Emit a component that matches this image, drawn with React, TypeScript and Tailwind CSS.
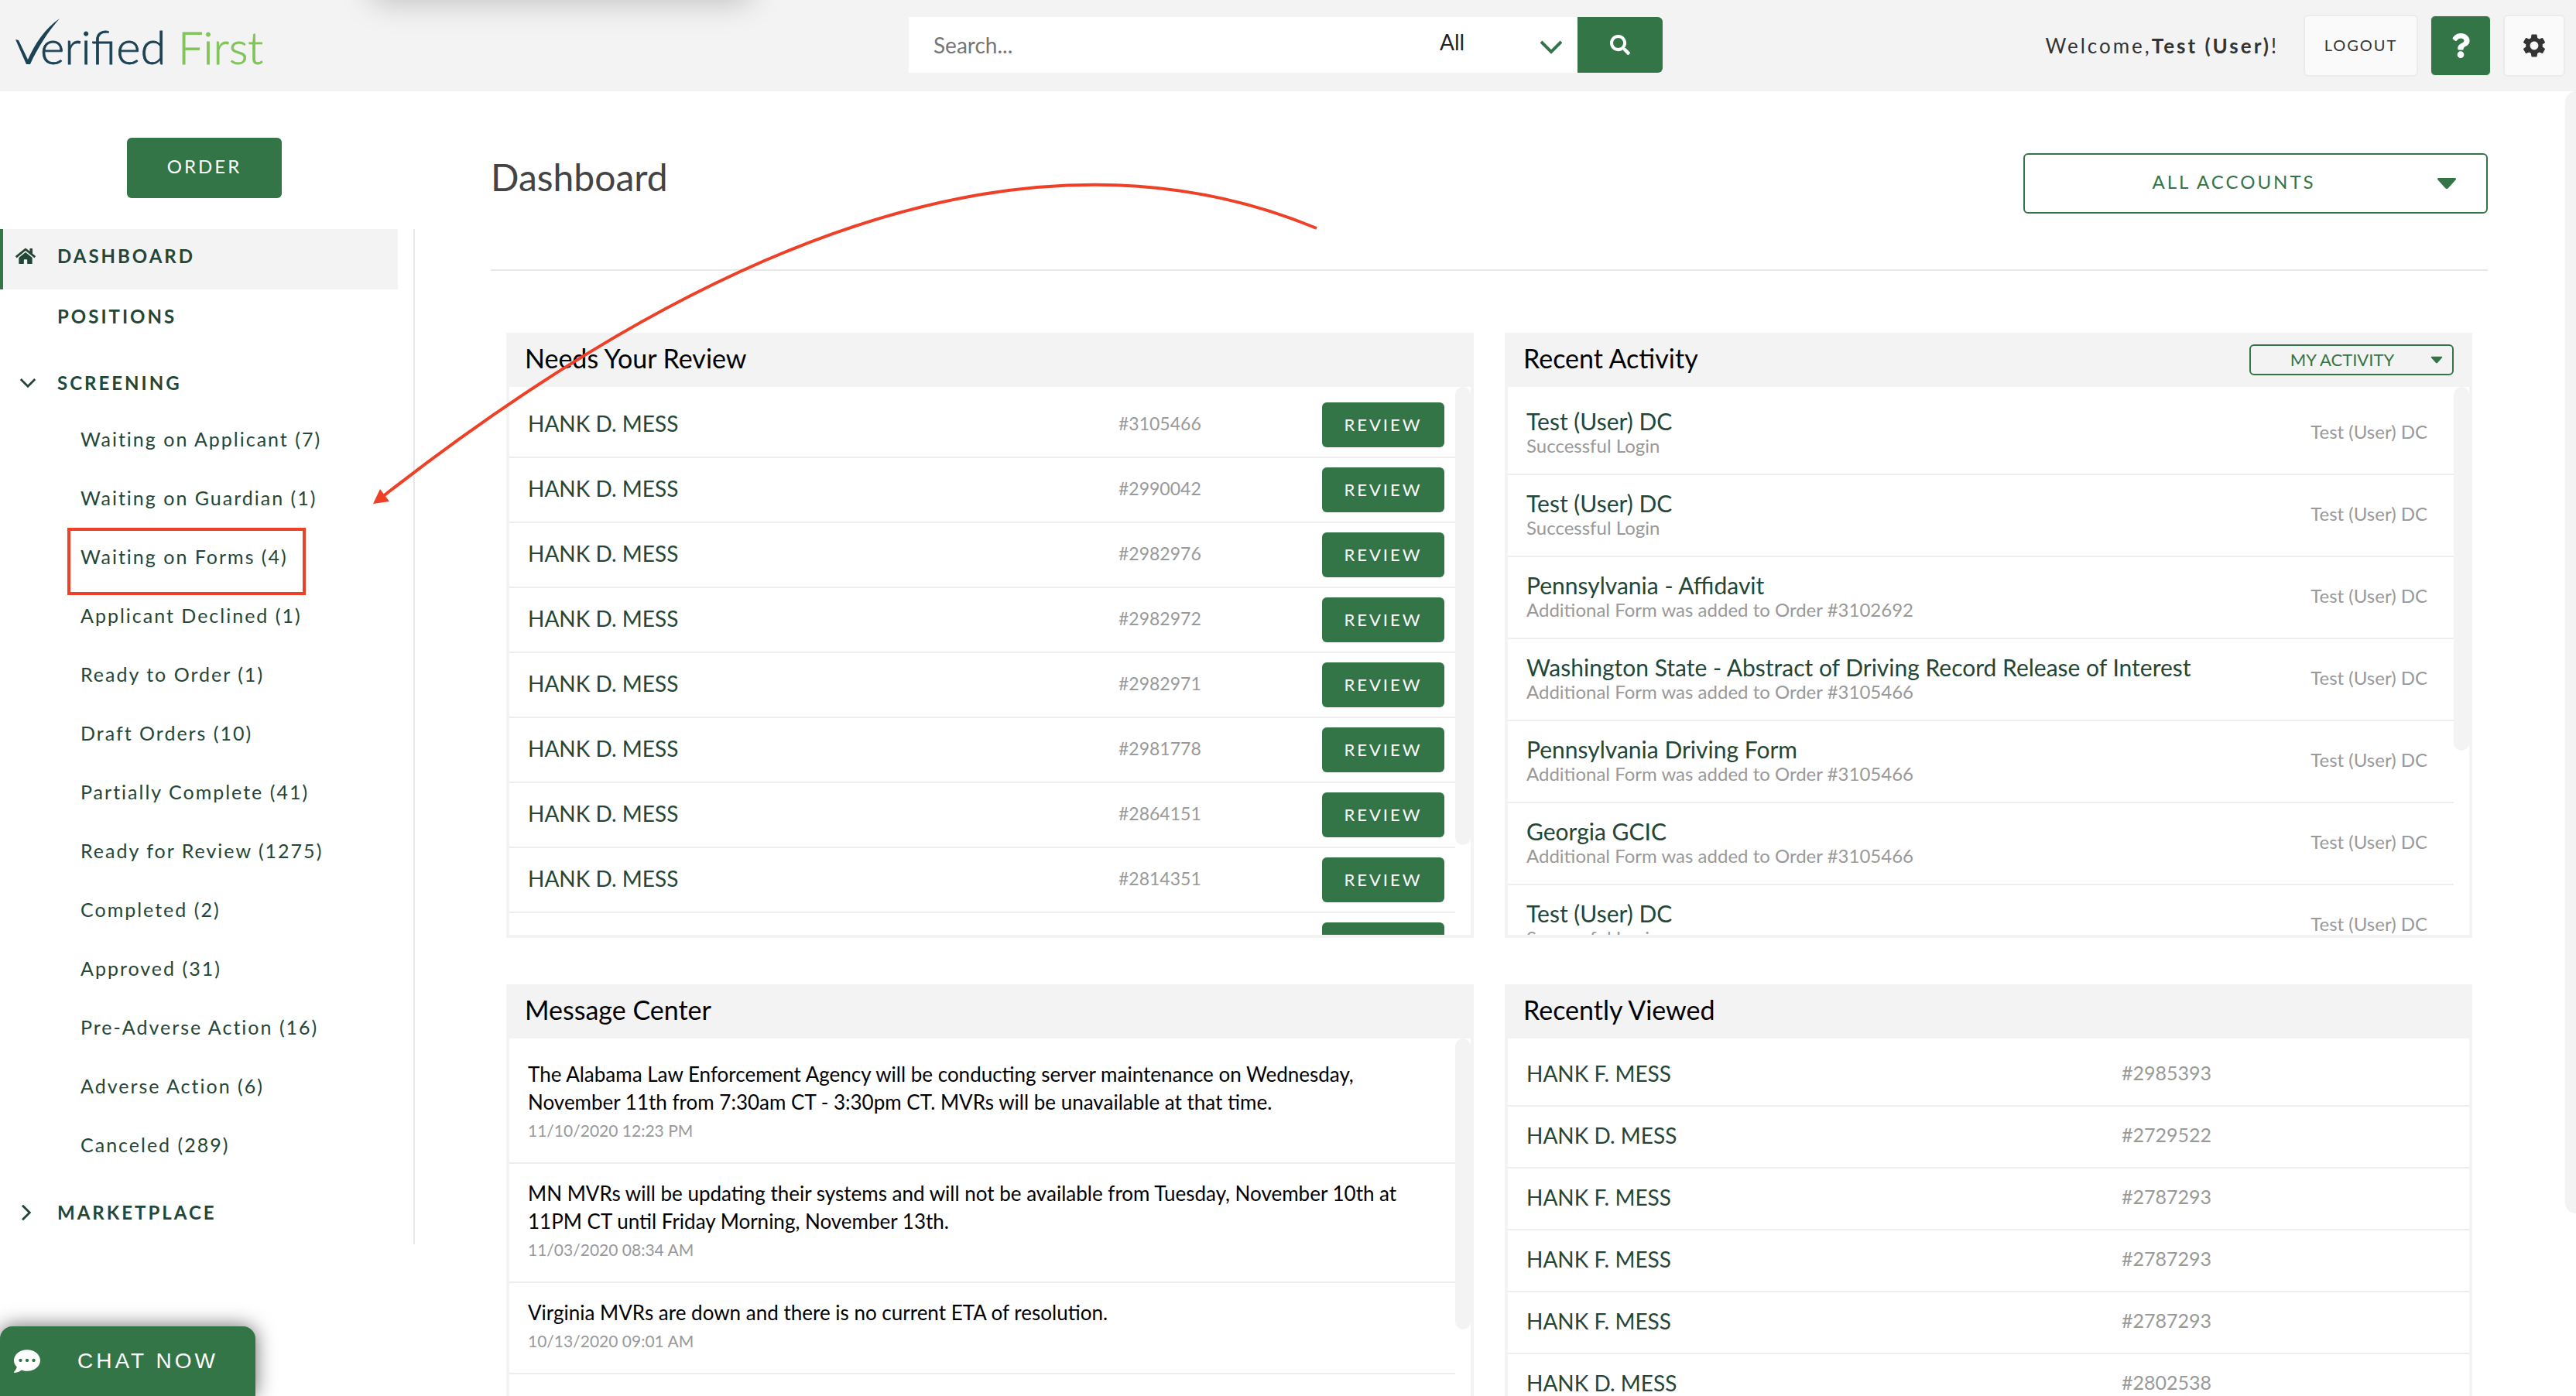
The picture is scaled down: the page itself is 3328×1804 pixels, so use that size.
import React, { useState } from "react";
import { FaCommentDots, FaHome, FaQuestion, FaSearch } from "react-icons/fa";
import { MdSettings } from "react-icons/md";

const screeningItems = [
  { label: "Waiting on Applicant", count: 7 },
  { label: "Waiting on Guardian", count: 1 },
  { label: "Waiting on Forms", count: 4 },
  { label: "Applicant Declined", count: 1 },
  { label: "Ready to Order", count: 1 },
  { label: "Draft Orders", count: 10 },
  { label: "Partially Complete", count: 41 },
  { label: "Ready for Review", count: 1275 },
  { label: "Completed", count: 2 },
  { label: "Approved", count: 31 },
  { label: "Pre-Adverse Action", count: 16 },
  { label: "Adverse Action", count: 6 },
  { label: "Canceled", count: 289 },
];

const reviews = [
  { name: "HANK D. MESS", order: "#3105466" },
  { name: "HANK D. MESS", order: "#2990042" },
  { name: "HANK D. MESS", order: "#2982976" },
  { name: "HANK D. MESS", order: "#2982972" },
  { name: "HANK D. MESS", order: "#2982971" },
  { name: "HANK D. MESS", order: "#2981778" },
  { name: "HANK D. MESS", order: "#2864151" },
  { name: "HANK D. MESS", order: "#2814351" },
  { name: "HANK D. MESS", order: "" },
];

const activity = [
  { title: "Test (User) DC", detail: "Successful Login" },
  { title: "Test (User) DC", detail: "Successful Login" },
  { title: "Pennsylvania - Affidavit", detail: "Additional Form was added to Order #3102692" },
  {
    title: "Washington State - Abstract of Driving Record Release of Interest",
    detail: "Additional Form was added to Order #3105466",
  },
  { title: "Pennsylvania Driving Form", detail: "Additional Form was added to Order #3105466" },
  { title: "Georgia GCIC", detail: "Additional Form was added to Order #3105466" },
  { title: "Test (User) DC", detail: "Successful Login" },
];

const messages = [
  {
    text: "The Alabama Law Enforcement Agency will be conducting server maintenance on Wednesday, November 11th from 7:30am CT - 3:30pm CT. MVRs will be unavailable at that time.",
    date: "11/10/2020 12:23 PM",
  },
  {
    text: "MN MVRs will be updating their systems and will not be available from Tuesday, November 10th at 11PM CT until Friday Morning, November 13th.",
    date: "11/03/2020 08:34 AM",
  },
  {
    text: "Virginia MVRs are down and there is no current ETA of resolution.",
    date: "10/13/2020 09:01 AM",
  },
];

const viewed = [
  { name: "HANK F. MESS", order: "#2985393" },
  { name: "HANK D. MESS", order: "#2729522" },
  { name: "HANK F. MESS", order: "#2787293" },
  { name: "HANK F. MESS", order: "#2787293" },
  { name: "HANK F. MESS", order: "#2787293" },
  { name: "HANK D. MESS", order: "#2802538" },
];

const Logo: React.FC = () => (
  <a href="#" aria-label="Verified First" className="flex items-center">
    <svg width="360" height="100" viewBox="0 -10 360 100" role="img">
      <path
        d="M12 32 L16 33 L28 58 C38 36 50 18 69 5 C54 22 41 42 31 64 L26 64 Z"
        fill="#1c4254"
      />
      <g fontSize="58" fontWeight="300" strokeWidth="0.8">
        <text x="44" y="64" fontSize="60" fill="#1c4254" stroke="#1c4254">
          erified
        </text>
        <text x="222" y="64" fill="#82c35b" stroke="#82c35b">
          First
        </text>
      </g>
    </svg>
  </a>
);

interface ChevronProps {
  className: string;
  direction?: "down" | "right";
}

const Chevron: React.FC<ChevronProps> = ({ className, direction = "down" }) => (
  <svg viewBox="0 0 28 28" className={className} fill="none" stroke="currentColor" strokeWidth="4">
    {direction === "down" ? <path d="M1 7 L14 20 L27 7" /> : <path d="M7 1 L20 14 L7 27" />}
  </svg>
);

const Caret: React.FC<{ className: string }> = ({ className }) => (
  <svg viewBox="0 0 26 16" className={className}>
    <path
      d="M2 1 H24 Q26 2 24 4 L15 14 Q13 16 11 14 L2 4 Q0 2 2 1 Z"
      fill="currentColor"
    />
  </svg>
);

interface PanelProps {
  title: string;
  action?: React.ReactNode;
  thumb?: string;
  children: React.ReactNode;
}

const Panel: React.FC<PanelProps> = ({ title, action, thumb, children }) => (
  <section className="flex h-[782px] flex-col border-4 border-t-0 border-[#f3f3f3]">
    <header className="flex h-[70px] shrink-0 items-center justify-between bg-[#f3f3f3] pr-5 pl-5">
      <h2 className="pb-1 text-[34px] leading-[40px] text-black">{title}</h2>
      {action}
    </header>
    <div className="flex min-h-0 flex-1 overflow-hidden">
      <div className="min-w-0 flex-1 pt-2">{children}</div>
      {thumb && (
        <div className="w-5 shrink-0">
          <div className={`rounded-full bg-[#f3f3f3] ${thumb}`} />
        </div>
      )}
    </div>
  </section>
);

const Header: React.FC = () => {
  const [query, setQuery] = useState("");

  return (
    <header className="grid h-[118px] shrink-0 grid-cols-[1fr_974px_1fr] items-center bg-[#f3f3f3] pr-3.5 pl-2">
      <Logo />
      <form className="mb-0.5 flex h-[72px] bg-white" onSubmit={(e) => e.preventDefault()}>
        <input
          type="text"
          aria-label="Search"
          placeholder="Search..."
          value={query}
          onChange={(e) => setQuery(e.target.value)}
          className="min-w-0 flex-1 px-8 text-[28px] text-[#222] outline-none placeholder:text-[#757575]"
        />
        <div className="relative flex w-[180px] items-center">
          <select
            aria-label="Search in"
            className="h-full w-full appearance-none pb-2 pl-0.5 text-[28px] text-[#222] outline-none"
          >
            <option>All</option>
          </select>
          <Chevron className="pointer-events-none absolute right-5 mt-1.5 h-7 w-7 text-[#337547]" />
        </div>
        <button
          type="submit"
          aria-label="Search"
          className="flex w-[110px] items-center justify-center rounded-r-md bg-[#337547] text-white"
        >
          <FaSearch size={26} />
        </button>
      </form>
      <div className="flex items-center justify-end gap-4">
        <p className="mr-4 text-[26px] tracking-[3px] text-[#333]">
          Welcome,<strong>Test (User)</strong>!
        </p>
        <button
          type="button"
          className="h-20 w-[148px] rounded-md border-2 border-[#ebebeb] bg-[#fafafa] pb-0.5 text-[20px] tracking-[2px] text-[#333]"
        >
          LOGOUT
        </button>
        <button
          type="button"
          aria-label="Help"
          className="flex h-[78px] w-[78px] items-center justify-center rounded-md border border-[#ebebeb] bg-[#337547] text-white"
        >
          <FaQuestion size={32} />
        </button>
        <button
          type="button"
          aria-label="Settings"
          className="flex h-20 w-20 items-center justify-center rounded-md border-2 border-[#ebebeb] bg-[#fafafa] text-[#333]"
        >
          <MdSettings size={36} />
        </button>
      </div>
    </header>
  );
};

const Sidebar: React.FC = () => (
  <aside className="w-[536px] shrink-0 pt-[60px]">
    <button
      type="button"
      className="mb-10 ml-[164px] h-[78px] w-[200px] rounded-md bg-[#337547] pb-1 text-[24px] tracking-[3px] text-white"
    >
      ORDER
    </button>
    <nav className="border-r-2 border-[#e8e8e8] pr-5 text-[#234636]">
      <a
        href="#"
        className="flex h-[78px] items-center border-l-4 border-[#337547] bg-[#f3f3f3] pb-2 text-[24px] font-bold tracking-[3px]"
      >
        <span className="w-[70px] pl-4">
          <FaHome size={26} />
        </span>
        DASHBOARD
      </a>
      <a
        href="#"
        className="flex h-[78px] items-center pb-2 pl-[74px] text-[24px] font-bold tracking-[3px]"
      >
        POSITIONS
      </a>
      <a
        href="#"
        className="mt-2 flex h-[78px] items-center pb-2 text-[24px] font-bold tracking-[3px]"
      >
        <span className="w-[74px] pl-[26px]">
          <Chevron className="h-5 w-5" />
        </span>
        SCREENING
      </a>
      <ul>
        {screeningItems.map((item) => (
          <li key={item.label}>
            <a
              href="#"
              className="relative flex h-[76px] items-center pb-4 pl-[104px] text-[25px] tracking-[2px]"
            >
              {item.label} ({item.count})
              {item.label === "Waiting on Forms" && (
                <span className="absolute -top-2 left-[87px] h-[87px] w-[308px] border-4 border-[#ee4027]" />
              )}
            </a>
          </li>
        ))}
      </ul>
      <a
        href="#"
        className="mt-1 flex h-[78px] items-center pb-1 text-[24px] font-bold tracking-[3px]"
      >
        <span className="w-[74px] pl-6">
          <Chevron className="h-5 w-5" direction="right" />
        </span>
        MARKETPLACE
      </a>
    </nav>
  </aside>
);

const ActivityFilter: React.FC = () => (
  <div className="relative flex items-center text-[#337547]">
    <select
      aria-label="Activity filter"
      className="h-10 w-[264px] appearance-none rounded-md border-2 border-[#337547] pr-6 text-center text-[22px] leading-[32px] outline-none"
    >
      <option>MY ACTIVITY</option>
    </select>
    <Caret className="pointer-events-none absolute right-3.5 h-[10px] w-4" />
  </div>
);

const Dashboard: React.FC = () => (
  <main className="min-w-0 flex-1 pr-[100px] pl-[98px]">
    <div className="flex h-[232px] items-center justify-between border-b-2 border-[#e8e8e8] pt-2">
      <h1 className="pb-4 text-[48px] text-[#444]">Dashboard</h1>
      <div className="relative flex items-center text-[#337547]">
        <select
          aria-label="Account"
          className="h-[78px] w-[600px] appearance-none rounded-md border-2 border-[#337547] pr-14 pb-1 text-center text-[24px] tracking-[3px] outline-none"
        >
          <option>ALL ACCOUNTS</option>
        </select>
        <Caret className="pointer-events-none absolute right-10 h-4 w-[26px]" />
      </div>
    </div>

    <div className="grid grid-cols-2 gap-x-10 gap-y-[60px] px-5 pt-20">
      <Panel title="Needs Your Review" thumb="h-[592px]">
        <ul>
          {reviews.map((row, index) => (
            <li
              key={index}
              className="flex h-[84px] items-center border-b-2 border-[#eee] pr-3.5 pl-6"
            >
              <a href="#" className="flex-1 pb-1 text-[28px] text-[#234636]">
                {row.name}
              </a>
              <span className="w-[263px] pb-1 text-[23px] text-[#999]">{row.order}</span>
              <button
                type="button"
                className="h-[58px] w-[158px] rounded-md bg-[#337547] pb-0.5 text-[22px] tracking-[3px] text-white"
              >
                REVIEW
              </button>
            </li>
          ))}
        </ul>
      </Panel>

      <Panel title="Recent Activity" action={<ActivityFilter />} thumb="h-[470px]">
        <ul>
          {activity.map((row, index) => (
            <li
              key={index}
              className="flex h-[106px] items-center justify-between border-b-2 border-[#eee] pr-[34px] pb-0.5 pl-6"
            >
              <div>
                <a href="#" className="block text-[30px] leading-[34px] text-[#234636]">
                  {row.title}
                </a>
                <p className="text-[24px] leading-[30px] text-[#999]">{row.detail}</p>
              </div>
              <span className="pb-0.5 text-[24px] text-[#999]">Test (User) DC</span>
            </li>
          ))}
        </ul>
      </Panel>

      <Panel title="Message Center" thumb="h-[376px]">
        <ul>
          {messages.map((message) => (
            <li key={message.date} className="border-b-2 border-[#eee] px-6 pt-5 pb-[22px]">
              <p className="text-[26px] leading-[36px] text-black">{message.text}</p>
              <p className="text-[21px] leading-[38px] text-[#999]">{message.date}</p>
            </li>
          ))}
        </ul>
      </Panel>

      <Panel title="Recently Viewed">
        <ul>
          {viewed.map((row, index) => (
            <li key={index} className="flex h-20 items-center border-b-2 border-[#eee] pb-1 pl-6">
              <a href="#" className="flex-1 text-[28px] text-[#234636]">
                {row.name}
              </a>
              <span className="w-[449px] text-[25px] text-[#999]">{row.order}</span>
            </li>
          ))}
        </ul>
      </Panel>
    </div>
  </main>
);

const App: React.FC = () => (
  <div className="relative flex h-screen flex-col overflow-hidden bg-white font-['Lato',sans-serif]">
    <Header />
    <div className="flex min-h-0 flex-1 overflow-hidden">
      <Sidebar />
      <Dashboard />
      <div className="w-3.5 shrink-0">
        <div className="h-[1450px] rounded-l-full bg-[#f3f3f3]" />
      </div>
    </div>

    {/* soft shadow falling from above the header */}
    <div className="pointer-events-none absolute -top-10 left-[480px] h-10 w-[490px] rounded-xl shadow-[0_0_40px_rgba(0,0,0,0.25)]" />

    {/* callout arrow */}
    <svg
      width="1240"
      height="430"
      viewBox="470 230 1240 430"
      className="pointer-events-none absolute top-[230px] left-[470px]"
    >
      <path d="M1701 295 Q1202 88 494 642" fill="none" stroke="#ee4027" strokeWidth="4" />
      <path d="M482 651 L491 632 L503 648 Z" fill="#ee4027" />
    </svg>

    <button
      type="button"
      className="absolute bottom-0 left-0 flex h-[90px] w-[330px] items-center gap-12 rounded-t-2xl bg-[#337547] pl-[18px] font-['Liberation_Sans',sans-serif] text-[28px] tracking-[4px] text-white shadow-[0_0_26px_rgba(0,0,0,0.6)]"
    >
      <FaCommentDots size={34} />
      CHAT NOW
    </button>
  </div>
);

export default App;
